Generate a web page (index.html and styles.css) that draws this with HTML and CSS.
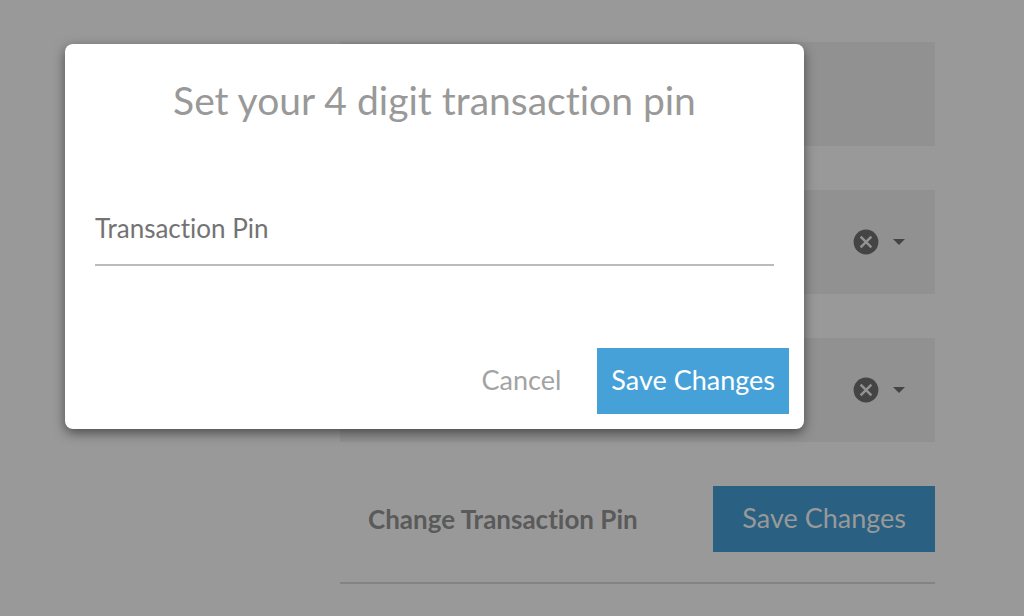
FILE: index.html
```html
<!DOCTYPE html>
<html lang="en">
<head>
<meta charset="UTF-8">
<meta name="viewport" content="width=device-width, initial-scale=1.0">
<title>Transaction pin</title>
<link rel="stylesheet" href="styles.css">
</head>
<body>
  <main class="settings">
    <div class="field"></div>
    <div class="field">
      <button class="icon-button" type="button" aria-label="Clear first selection">
        <svg class="clear" viewBox="0 0 26 26"><circle cx="13" cy="13" r="12.4"/><path d="M7.6 7.6l10.8 10.8M18.4 7.6L7.6 18.4"/></svg>
      </button>
      <button class="icon-button" type="button" aria-label="Open first list">
        <svg class="arrow" viewBox="0 0 12 6"><path d="M0 0h12L6 6z"/></svg>
      </button>
    </div>
    <div class="field">
      <button class="icon-button" type="button" aria-label="Clear second selection">
        <svg class="clear" viewBox="0 0 26 26"><circle cx="13" cy="13" r="12.4"/><path d="M7.6 7.6l10.8 10.8M18.4 7.6L7.6 18.4"/></svg>
      </button>
      <button class="icon-button" type="button" aria-label="Open second list">
        <svg class="arrow" viewBox="0 0 12 6"><path d="M0 0h12L6 6z"/></svg>
      </button>
    </div>
    <div class="actions">
      <button class="change" type="button">Change Transaction Pin</button>
      <button class="save" type="button">Save Changes</button>
    </div>
  </main>

  <div class="overlay">
    <form class="dialog" role="dialog" aria-labelledby="dialog-title">
      <h1 id="dialog-title">Set your 4 digit transaction pin</h1>
      <div class="pin">
        <label for="pin">Transaction Pin</label>
        <input id="pin" type="password" inputmode="numeric" maxlength="4">
      </div>
      <div class="dialog-actions">
        <button class="cancel" type="button">Cancel</button>
        <button class="confirm" type="button">Save Changes</button>
      </div>
    </form>
  </div>
</body>
</html>
```
FILE: styles.css
```css
* {
  box-sizing: border-box;
}
body {
  margin: 0;
  min-height: 100vh;
  background-color: #999;
  font-family: Lato, "Liberation Sans", sans-serif;
  font-size: 26px;
  font-variant-ligatures: none;
}
button {
  border: none;
  background: none;
  padding: 0;
  font: inherit;
  font-variant-ligatures: none;
  cursor: pointer;
}

/* settings page */
.settings {
  margin-left: 340px;
  margin-right: 89px;
  padding-top: 42px;
}
.field {
  display: flex;
  align-items: center;
  justify-content: flex-end;
  gap: 14px;
  height: 104px;
  margin-bottom: 44px;
  padding-right: 30px;
  background-color: #919191;
}
.icon-button {
  display: flex;
}
.clear {
  width: 26px;
  height: 26px;
  fill: #444;
}
.clear path {
  stroke: #929292;
  stroke-width: 2.5;
}
.arrow {
  width: 12px;
  height: 6px;
  fill: #444;
}
.actions {
  display: flex;
  align-items: center;
  justify-content: space-between;
  padding: 0 0 30px 28px;
  border-bottom: 2px solid #838383;
}
.change {
  color: #5a5a5a;
  font-weight: bold;
}
.save,
.cancel,
.confirm {
  height: 66px;
  padding-bottom: 4px;
  font-size: 27px;
}
.save {
  padding-left: 29px;
  padding-right: 29px;
  background-color: #2a6182;
  color: #999;
}

/* dialog */
.overlay {
  position: absolute;
  inset: 0;
  padding: 44px 220px 0 65px;
}
.dialog {
  padding: 32px 15px 15px;
  border-radius: 8px;
  background-color: #fff;
  box-shadow: 0 4px 12px rgba(0, 0, 0, 0.5);
}
h1 {
  margin: 0;
  color: #999;
  font-size: 39px;
  font-weight: 400;
  line-height: 48px;
  text-align: center;
}
.pin {
  margin: 88px 15px 82px;
}
.pin label {
  display: block;
  color: #737373;
  line-height: 32px;
}
.pin input {
  display: block;
  width: 100%;
  height: 22px;
  border: none;
  border-bottom: 2px solid #bbb;
  outline: none;
  background: none;
}
.dialog-actions {
  display: flex;
  justify-content: flex-end;
  gap: 36px;
}
.cancel {
  color: #a3a3a3;
}
.confirm {
  padding-left: 14px;
  padding-right: 14px;
  background-color: #46a1d9;
  color: #fff;
}
```
